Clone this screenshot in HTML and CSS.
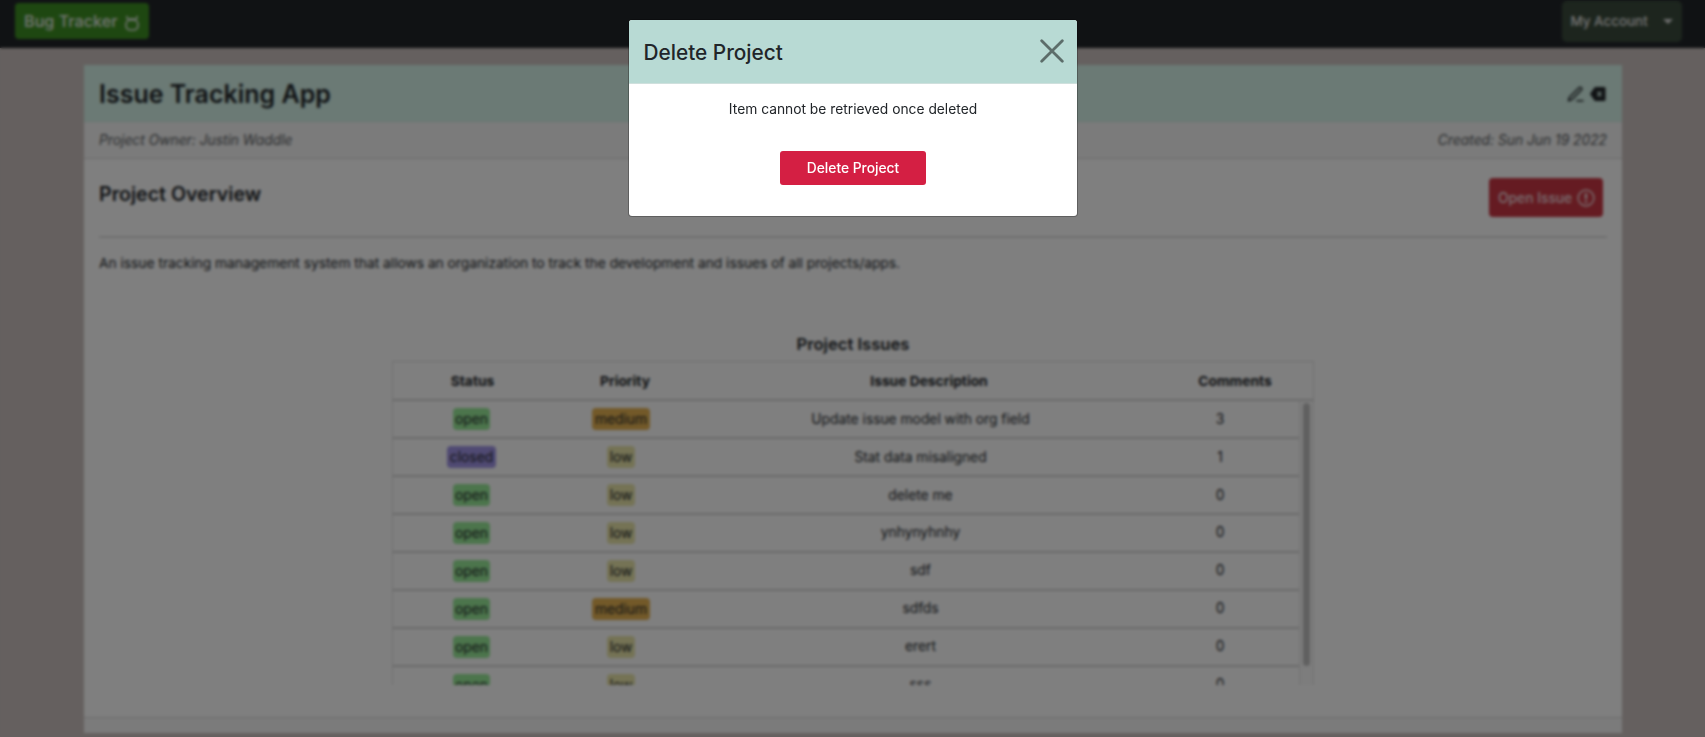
FILE: index.html
```
<!DOCTYPE html>
<html lang="en">
<head>
<meta charset="utf-8">
<title>Bug Tracker</title>
<link rel="stylesheet" href="styles.css">
</head>
<body>
<nav class="navbar">
  <a class="brand">Bug Tracker
    <svg class="bug" viewBox="0 0 16 16" fill="none" stroke="currentColor" stroke-width="1.6" stroke-linecap="round"><path d="M3 1.500v1.500l1.500 1.500M13 1.500v1.500l-1.500 1.500M5 4.400Q8 3 11 4.400"/><rect x="2" y="5" width="12" height="10" rx="4.500"/></svg>
  </a>
  <a class="account">My Account <span class="caret"></span></a>
</nav>

<main class="card">
  <header class="card-header">
    <h1>Issue Tracking App</h1>
    <div class="actions">
      <svg viewBox="0 0 16 16" fill="none" stroke="currentColor" stroke-width="1.5" stroke-linejoin="round"><path d="M1 14.800l1-3.600L11.500 1.700q1.200-1 2.300 0 1 1.200 0 2.300L4.500 13.600z M9 14.800h7"/></svg>
      <svg class="backspace" viewBox="0 0 18 16"><path fill="currentColor" fill-rule="evenodd" d="M16 .5H7.300q-.9 0-1.500.7L1 8l4.800 6.800q.6.700 1.500.700H16q1.500 0 1.500-1.500v-12Q17.500.5 16 .5zM8.500 6l1-1L11 6.700 12.500 5l1 1L12 8l1.500 2-1 1L11 9.300 9.500 11l-1-1L10 8z"/></svg>
    </div>
  </header>
  <div class="meta"><em>Project Owner: Justin Waddle</em><em>Created: Sun Jun 19 2022</em></div>
  <section class="content">
    <div class="overview">
      <h2>Project Overview</h2>
      <button class="open-issue">Open Issue
        <svg viewBox="0 0 18 18" fill="none" stroke="currentColor" stroke-width="1.500"><circle cx="9" cy="9" r="7.900"/><path stroke-width="2.400" d="M9 4.300v6M9 11.700v2.200"/></svg>
      </button>
    </div>
    <p class="description">An issue tracking management system that allows an organization to track the development and issues of all projects/apps.</p>
    <h3>Project Issues</h3>
    <div class="issues">
      <div class="row head"><span>Status</span><span>Priority</span><span>Issue Description</span><span>Comments</span></div>
      <div class="scroll">
        <div class="rows">
          <div class="row"><span><b class="open">open</b></span><span><b class="medium">medium</b></span><span>Update issue model with org field</span><span>3</span></div>
          <div class="row"><span><b class="closed">closed</b></span><span><b class="low">low</b></span><span>Stat data misaligned</span><span>1</span></div>
          <div class="row"><span><b class="open">open</b></span><span><b class="low">low</b></span><span>delete me</span><span>0</span></div>
          <div class="row"><span><b class="open">open</b></span><span><b class="low">low</b></span><span>ynhynyhnhy</span><span>0</span></div>
          <div class="row"><span><b class="open">open</b></span><span><b class="low">low</b></span><span>sdf</span><span>0</span></div>
          <div class="row"><span><b class="open">open</b></span><span><b class="medium">medium</b></span><span>sdfds</span><span>0</span></div>
          <div class="row"><span><b class="open">open</b></span><span><b class="low">low</b></span><span>erert</span><span>0</span></div>
          <div class="row"><span><b class="open">open</b></span><span><b class="low">low</b></span><span>sss</span><span>0</span></div>
        </div>
        <div class="track"><div class="thumb"></div></div>
      </div>
    </div>
  </section>
  <footer class="card-footer"></footer>
</main>

<div class="backdrop">
  <div class="modal" role="dialog">
    <div class="modal-header">
      <h4>Delete Project</h4>
      <svg class="close" viewBox="0 0 24 24" fill="none" stroke="currentColor" stroke-width="2.800" stroke-linecap="round"><path d="M1.700 1.700l20.600 20.600M22.300 1.700L1.700 22.300"/></svg>
    </div>
    <div class="modal-body">
      <p>Item cannot be retrieved once deleted</p>
      <button class="delete">Delete Project</button>
    </div>
  </div>
</div>
</body>
</html>
```
FILE: styles.css
```
* { box-sizing: border-box; }
html, body { height: 100%; }
body {
  margin: 0;
  overflow: hidden;
  background: #cac1be;
  color: #212529;
  font: 13.8px/21px Inter, "Liberation Sans", sans-serif;
}
h1, h2, h3, h4, p { margin: 0; }
button { border: 0; color: #fff; font: inherit; font-weight: 500; }
svg { display: block; flex: none; }

.navbar {
  display: flex;
  justify-content: space-between;
  align-items: flex-start;
  height: 48px;
  padding: 1px 23.5px 0 15px;
  background: #212529;
}
.brand {
  display: flex;
  align-items: center;
  gap: 6px;
  width: 134px;
  height: 36px;
  margin-top: 2px;
  padding-left: 9px;
  border-radius: 4px;
  background: #3d8f22;
  color: #e8ece8;
  font-size: 16.2px;
  font-weight: 500;
}
.bug { width: 16px; height: 16px; margin-top: 4px; }
.account {
  display: flex;
  align-items: center;
  justify-content: space-between;
  width: 120px;
  height: 41px;
  padding: 0 9px;
  border-radius: 5px;
  background: #3a4b3c;
  color: #e6e6e6;
  font-size: 13.4px;
  font-weight: 500;
}
.caret { border: 5px solid transparent; border-top-color: #ddd; border-bottom: 0; }

.card {
  width: 1538px;
  height: 668px;
  margin: 17px 0 0 84px;
  display: flex;
  flex-direction: column;
  background: #fff;
}
.card-header {
  display: flex;
  justify-content: space-between;
  align-items: center;
  height: 57px;
  padding: 0 16px 0 15px;
  background: #d6f4ea;
}
h1 { font-size: 25px; line-height: 30px; font-weight: 600; }
.actions { display: flex; gap: 5px; }
.actions svg { width: 17px; height: 16px; }
.meta {
  display: flex;
  justify-content: space-between;
  align-items: center;
  height: 37px;
  padding: 0 15px;
  background: #f7f7f7;
  border-top: 1px solid #eee;
  border-bottom: 1px solid #d4d4d4;
  color: #55595c;
}
.content { flex: 1; padding: 0 15px; }
.overview {
  display: flex;
  justify-content: space-between;
  align-items: flex-start;
  height: 79px;
  padding: 19px 4px 0 0;
  border-bottom: 2px solid #dedede;
}
h2 { margin-top: 2px; font-size: 19.6px; line-height: 28px; font-weight: 600; }
.open-issue {
  display: flex;
  align-items: center;
  gap: 5px;
  width: 114px;
  height: 39px;
  padding: 1px 0 0 9px;
  border-radius: 4px;
  background: #ca3744;
  color: #f3dfe1;
}
.open-issue svg { width: 18px; height: 18px; }
.description { margin-top: 15px; font-size: 13.77px; }
h3 { margin-top: 58px; text-align: center; font-size: 16.6px; line-height: 24px; font-weight: 600; }

.issues { width: 922px; margin: 5px auto 0 293px; border-top: 1px solid #dcdcdc; }
.row {
  display: grid;
  grid-template-columns: 157px 142px 457px 142px;
  height: 37.95px;
  align-items: center;
  border-bottom: 2px solid #d6d6d6;
  border-left: 1px solid #dedede;
  text-align: center;
}
.row.head {
  grid-template-columns: 159px 146px 462px 150px;
  height: 39.2px;
  padding-top: 2px;
  border-right: 1px solid #dedede;
  font-weight: 700;
}
.row b { display: inline-block; padding: 0 2.5px; border-radius: 4px; font-weight: 400; line-height: 22px; }
.open { background: #98ea98; }
.closed { background: #a094e6; }
.medium { background: #e6b352; }
.low { background: #eae6aa; }
.scroll { display: flex; height: 284px; overflow: hidden; }
.rows { width: 907px; }
.track {
  width: 15px;
  padding: 2px 3px;
  border: solid #e2e2e2;
  border-width: 0 1px;
  background: #fafafa;
}
.thumb { height: 263px; border-radius: 4px; background: #c1c1c1; }
.card-footer { height: 16px; background: #f7f7f7; border-top: 1px solid #d4d4d4; }

.backdrop {
  position: fixed;
  inset: 0;
  padding: 20px 0 0 629px;
  background: rgba(0, 0, 0, .5);
  backdrop-filter: blur(1.8px);
}
.modal {
  width: 448px;
  height: 196px;
  overflow: hidden;
  border-radius: 3px;
  background: #fff;
  box-shadow: 0 0 0 1px rgba(0, 0, 0, .25);
}
.modal-header {
  display: flex;
  justify-content: space-between;
  align-items: center;
  height: 64px;
  padding: 0 13.5px 0 14.5px;
  background: #b8dad4;
  border-bottom: 1px solid #cfe0dd;
}
h4 { margin-top: 2px; font-size: 20.8px; line-height: 30px; font-weight: 500; }
.close { width: 24px; height: 24px; margin-bottom: 1px; color: #5c6d6a; }
.modal-body { padding-top: 15px; text-align: center; }
.delete {
  width: 146px;
  height: 34px;
  margin-top: 31px;
  border-radius: 3px;
  background: #d41f43;
}
```
